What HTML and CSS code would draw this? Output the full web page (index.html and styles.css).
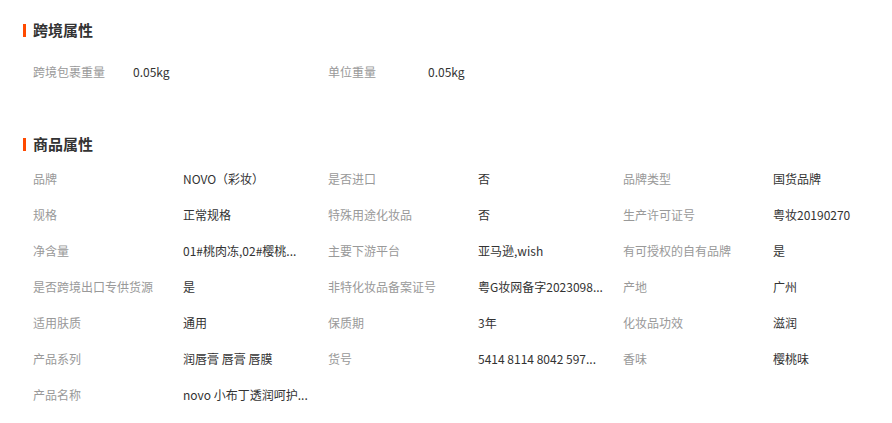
FILE: index.html
```html
<!DOCTYPE html>
<html lang="zh-CN">
<head>
  <meta charset="UTF-8" />
  <meta name="viewport" content="width=device-width, initial-scale=1.0" />
  <title>商品属性</title>
  <link rel="stylesheet" href="styles.css">
</head>
<body>
  <div class="section">
    <h2 class="title">跨境属性</h2>
    <div class="props cross">
      <div class="label">跨境包裹重量</div><div class="value">0.05kg</div>
      <div class="label">单位重量</div><div class="value">0.05kg</div>
    </div>
  </div>

  <div class="section goods">
    <h2 class="title">商品属性</h2>
    <div class="props">
      <div class="label">品牌</div><div class="value">NOVO（彩妆）</div>
      <div class="label">是否进口</div><div class="value">否</div>
      <div class="label">品牌类型</div><div class="value">国货品牌</div>

      <div class="label">规格</div><div class="value">正常规格</div>
      <div class="label">特殊用途化妆品</div><div class="value">否</div>
      <div class="label">生产许可证号</div><div class="value">粤妆20190270</div>

      <div class="label">净含量</div><div class="value" title="01#桃肉冻,02#樱桃肉冻">01#桃肉冻,02#樱桃...</div>
      <div class="label">主要下游平台</div><div class="value">亚马逊,wish</div>
      <div class="label">有可授权的自有品牌</div><div class="value">是</div>

      <div class="label">是否跨境出口专供货源</div><div class="value">是</div>
      <div class="label">非特化妆品备案证号</div><div class="value">粤G妆网备字2023098...</div>
      <div class="label">产地</div><div class="value">广州</div>

      <div class="label">适用肤质</div><div class="value">通用</div>
      <div class="label">保质期</div><div class="value">3年</div>
      <div class="label">化妆品功效</div><div class="value">滋润</div>

      <div class="label">产品系列</div><div class="value">润唇膏 唇膏 唇膜</div>
      <div class="label">货号</div><div class="value">5414 8114 8042 597...</div>
      <div class="label">香味</div><div class="value">樱桃味</div>

      <div class="label">产品名称</div><div class="value">novo 小布丁透润呵护...</div>
    </div>
  </div>
</body>
</html>
```

FILE: styles.css
```css
body { margin: 0; font-family: "Noto Sans CJK SC", "Noto Sans", sans-serif; font-size: 12px; color: #333; background: #fff; }
.section { padding: 20px 0 0 23px; }
.goods { padding-top: 44px; }
.title { display: flex; align-items: center; margin: 0; font-size: 15px; line-height: 20px; font-weight: bold; color: #333; }
.title::before { content: ""; width: 3px; height: 13px; background: #ff4a00; margin-right: 7px; }
.props { display: grid; grid-template-columns: repeat(3, 150px 145px); grid-auto-rows: 36px; padding-left: 10px; margin-top: 7px; }
.cross { grid-template-columns: 100px 195px 100px 145px; margin-top: 14px; }
.label, .value { line-height: 36px; white-space: nowrap; }
.label { color: #999; }
.value { color: #333; }
```
